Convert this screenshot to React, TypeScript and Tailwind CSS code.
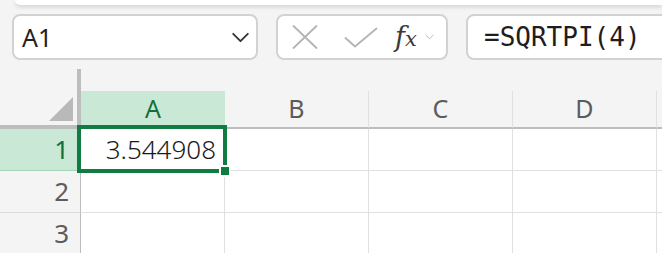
import React from 'react';

const cols = ['A', 'B', 'C', 'D', 'E'];
const rows = [1, 2, 3];

function ChevronDown({ className }: { className?: string }) {
  return (
    <svg viewBox="0 0 20 12" className={className} fill="none" stroke="currentColor" strokeWidth="2" strokeLinecap="round" strokeLinejoin="round">
      <path d="M2 2 L10 10 L18 2" />
    </svg>
  );
}

export default function App() {
  return (
    <div className="relative w-[662px] h-[253px] overflow-hidden bg-[#f4f4f4] font-['Noto_Sans',sans-serif]">
      {/* ribbon edge */}
      <div className="h-[5px] ml-[15px] bg-white rounded-bl-[10px] shadow-[0_2px_4px_rgba(0,0,0,0.14)]" />

      {/* formula bar */}
      <div className="mt-[9px] flex h-[46px] pl-[12px] gap-[18px]">
        <div className="w-[246px] shrink-0 flex items-center justify-between rounded-[8px] border-2 border-[#d2d2d2] bg-white pl-[8px] pr-[6px]">
          <span className="text-[25px] leading-none text-[#222]">A1</span>
          <ChevronDown className="w-[19px] h-[11px] text-[#333]" />
        </div>
        <div className="w-[172px] shrink-0 flex items-center rounded-[8px] border-2 border-[#d2d2d2] bg-white pl-[14px]">
          <svg viewBox="0 0 26 24" className="w-[26px] h-[24px] text-[#b4b4b4]" fill="none" stroke="currentColor" strokeWidth="1.8" strokeLinecap="round">
            <path d="M1.5 1 L24.5 23 M24.5 1 L1.5 23" />
          </svg>
          <svg viewBox="0 0 34 21" className="ml-[26px] w-[34px] h-[21px] text-[#b4b4b4]" fill="none" stroke="currentColor" strokeWidth="1.8" strokeLinecap="round" strokeLinejoin="round">
            <path d="M1.5 11 L11 19.5 L32.5 1.5" />
          </svg>
          <span className="ml-[17px] font-['DejaVu_Serif',serif] italic text-[27px] leading-none text-[#3a3a3a] -mt-[2px]">
            f<span className="text-[21px]">x</span>
          </span>
          <ChevronDown className="ml-[8px] w-[9px] h-[6px] text-[#b0b0b0]" />
        </div>
        <div className="w-[230px] shrink-0 flex items-center rounded-[8px] border-2 border-[#d2d2d2] bg-white pl-[16px]">
          <span className="font-['DejaVu_Sans_Mono',monospace] text-[26px] leading-none text-[#1e1e1e]">=SQRTPI(4)</span>
        </div>
      </div>

      {/* column headers */}
      <div className="mt-[9px] flex items-end h-[60px]">
        <div className="relative w-[81px] h-[60px] shrink-0 border-r-4 border-b-4 border-[#bdbdbd]">
          <svg viewBox="0 0 24 24" className="absolute right-[4px] bottom-[4px] w-[24px] h-[24px]">
            <polygon points="24,0 24,24 0,24" fill="#b9b9b9" />
          </svg>
        </div>
        {cols.map((c) => (
          <div
            key={c}
            className={
              c === 'A'
                ? 'w-[144px] h-[38px] shrink-0 flex items-center justify-center border-b-2 border-[#bdbdbd] bg-[#c9e9d6] text-[25px] text-[#13703c]'
                : 'w-[144px] h-[38px] shrink-0 flex items-center justify-center border-r border-r-[#e0e0e0] border-b-2 border-b-[#bdbdbd] text-[25px] text-[#5c5c5c]'
            }
          >
            {c === 'E' ? '' : c}
          </div>
        ))}
      </div>

      {/* rows */}
      {rows.map((r) => (
        <div key={r} className="flex h-[42px]">
          <div
            className={
              r === 1
                ? 'w-[81px] shrink-0 flex items-center justify-end pr-[11px] bg-[#c9e9d6] border-b border-b-[#a3d6b7] border-r border-r-[#bdbdbd] text-[26px] text-[#13703c]'
                : 'w-[81px] shrink-0 flex items-center justify-end pr-[11px] border-b border-b-[#dcdcdc] border-r border-r-[#bdbdbd] text-[26px] text-[#5c5c5c]'
            }
          >
            {r}
          </div>
          {cols.map((c) => (
            <div key={c} className="w-[144px] shrink-0 flex items-center justify-end pr-[8px] bg-white border-r border-b border-[#e0e0e0] text-[26px] font-light text-[#1a1a1a]">
              {r === 1 && c === 'A' ? '3.544908' : ''}
            </div>
          ))}
        </div>
      ))}

      {/* active cell */}
      <div className="absolute left-[77px] top-[125px] w-[150px] h-[48px] border-4 border-[#107c41]" />
      <div className="absolute left-[219px] top-[165px] w-[12px] h-[12px] border-2 border-white bg-[#107c41]" />
    </div>
  );
}
